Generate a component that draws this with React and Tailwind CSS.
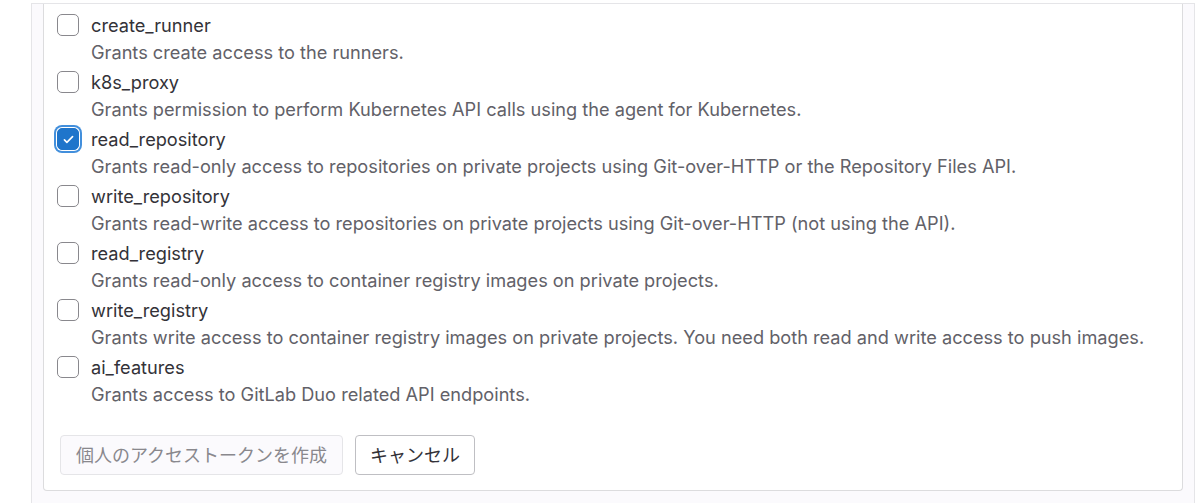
const SCOPES = [
  { name: 'create_runner', desc: 'Grants create access to the runners.' },
  { name: 'k8s_proxy', desc: 'Grants permission to perform Kubernetes API calls using the agent for Kubernetes.' },
  { name: 'read_repository', desc: 'Grants read-only access to repositories on private projects using Git-over-HTTP or the Repository Files API.', checked: true },
  { name: 'write_repository', desc: 'Grants read-write access to repositories on private projects using Git-over-HTTP (not using the API).' },
  { name: 'read_registry', desc: 'Grants read-only access to container registry images on private projects.' },
  { name: 'write_registry', desc: 'Grants write access to container registry images on private projects. You need both read and write access to push images.' },
  { name: 'ai_features', desc: 'Grants access to GitLab Duo related API endpoints.' },
]

function Box({ checked }) {
  if (checked) {
    return (
      <span className="w-[22px] h-[22px] rounded-[5px] bg-[#1f75cb] border border-[#1f75cb] flex items-center justify-center shadow-[0_0_0_1px_#fff,0_0_0_3px_#428fdc]">
        <svg width="13" height="13" viewBox="0 0 16 16" fill="none">
          <path d="M3 8.5l3 3 7-7" stroke="#fff" strokeWidth="2" strokeLinecap="round" strokeLinejoin="round" />
        </svg>
      </span>
    )
  }
  return <span className="w-[22px] h-[22px] rounded-[5px] bg-white border border-[#89888d]" />
}

export default function App() {
  return (
    <div className="h-[503px] overflow-hidden bg-white pl-[31px] pr-[5px] pt-[3px]" style={{ fontFamily: 'Inter, "Noto Sans CJK JP", sans-serif' }}>
      <div className="border-l border-t border-r border-[#e5e5e8] bg-[#fbfafd] px-[11px] pb-10 h-[560px]">
        <div className="bg-white border-l border-r border-b border-[#dcdcde] rounded-b-[4px] pl-[13px] pr-4 pt-[10px] pb-[15px]">
          <div className="flex flex-col">
            {SCOPES.map(s => (
              <div key={s.name} className="h-[57px] flex flex-col">
                <div className="flex items-center gap-[12px] h-[22px]">
                  <Box checked={s.checked} />
                  <span className="text-[18.2px] text-[#333238] leading-[22px]">{s.name}</span>
                </div>
                <p className="pl-[34px] mt-[5px] text-[18.2px] text-[#626168] leading-[22px]">{s.desc}</p>
              </div>
            ))}
          </div>
          <div className="flex gap-3 mt-[22px] pl-[3px]">
            <button className="h-10 w-[283px] rounded-[4px] border border-[#e5e5e8] bg-[#fbfafd] text-[18px] text-[#89888d]">
              個人のアクセストークンを作成
            </button>
            <button className="h-10 w-[120px] rounded-[4px] border border-[#bfbfc3] bg-white text-[18px] text-[#333238]">
              キャンセル
            </button>
          </div>
        </div>
      </div>
    </div>
  )
}
